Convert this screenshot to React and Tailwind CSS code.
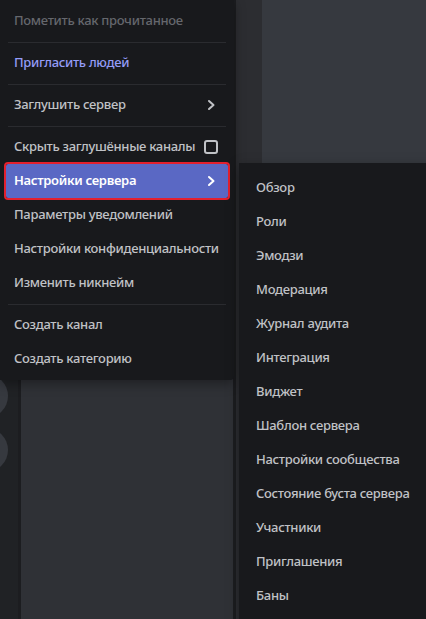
import React from "react";

const font = { fontFamily: '"Noto Sans", "Open Sans", sans-serif' };

function Chevron() {
  return (
    <svg width="10" height="12" viewBox="0 0 10 12" fill="none">
      <path d="M3 2 L7.5 6 L3 10" stroke="currentColor" strokeWidth="2" strokeLinecap="round" strokeLinejoin="round" />
    </svg>
  );
}

function Sep() {
  return (
    <div className="h-[8px] flex items-center px-[2px]">
      <div className="h-px w-full bg-[#2a2b2f]" />
    </div>
  );
}

function Item({ children, className = "", right = null, active = false }) {
  return (
    <div
      className={
        "h-[34px] flex items-center justify-between pl-2 pr-[12px] rounded-[2px] text-[13px] tracking-[-0.3px] font-medium " +
        (active ? "bg-[#5a68c4] text-white font-semibold outline-2 outline-[#e3202e]" : "") +
        " " +
        className
      }
    >
      <span className="whitespace-nowrap">{children}</span>
      {right}
    </div>
  );
}

export default function App() {
  const sub = [
    "Обзор",
    "Роли",
    "Эмодзи",
    "Модерация",
    "Журнал аудита",
    "Интеграция",
    "Виджет",
    "Шаблон сервера",
    "Настройки сообщества",
    "Состояние буста сервера",
    "Участники",
    "Приглашения",
    "Баны",
  ];
  return (
    <div className="relative w-[426px] h-[619px] overflow-hidden bg-[#36393f]" style={font}>
      {/* background app layout */}
      <div className="flex h-full">
        <div className="w-[18px] bg-[#202225] relative flex flex-col pt-[374px] gap-[10px] overflow-hidden">
          <div className="w-[44px] h-[44px] rounded-full bg-[#36393f] -ml-[36px] shrink-0" />
          <div className="w-[44px] h-[44px] rounded-full bg-[#36393f] -ml-[36px] shrink-0" />
        </div>
        <div className="w-[3px] bg-[#1c1d20]" />
        <div className="w-[212px] bg-[#2f3136]" />
        <div className="w-[3px] bg-[#1c1d20]" />
        <div className="w-[26px] bg-[#2c2d31]" />
        <div className="flex-1 bg-[#36393f]" />
      </div>

      {/* main context menu */}
      <div className="absolute left-0 top-0 w-[234px] bg-[#18191c] rounded-br-[4px] px-[6px] py-[4px] text-[#c0c2c6] shadow-[0_4px_12px_rgba(0,0,0,0.35)]">
        <Item className="text-[#65676d]">Пометить как прочитанное</Item>
        <Sep />
        <Item className="text-[#949cf7]">Пригласить людей</Item>
        <Sep />
        <Item right={<span className="text-[#c0c2c6]"><Chevron /></span>}>Заглушить сервер</Item>
        <Sep />
        <Item right={<div className="w-[14px] h-[14px] shrink-0 border-2 border-[#c0c2c6] rounded-[3px] -mr-[2px]" />}>
          Скрыть заглушённые каналы
        </Item>
        <Item active right={<span className="text-white"><Chevron /></span>}>
          Настройки сервера
        </Item>
        <Item>Параметры уведомлений</Item>
        <Item>Настройки конфиденциальности</Item>
        <Item>Изменить никнейм</Item>
        <Sep />
        <Item>Создать канал</Item>
        <Item>Создать категорию</Item>
      </div>

      {/* submenu */}
      <div className="absolute left-[239px] top-[163px] w-[200px] h-[470px] bg-[#18191c] px-[8px] pt-[8px] text-[#c0c2c6] shadow-[0_4px_12px_rgba(0,0,0,0.35)]">
        {sub.map((s) => (
          <div key={s} className="h-[34px] flex items-center pl-[9px] text-[13px] tracking-[-0.3px] font-medium whitespace-nowrap">
            {s}
          </div>
        ))}
      </div>
    </div>
  );
}
